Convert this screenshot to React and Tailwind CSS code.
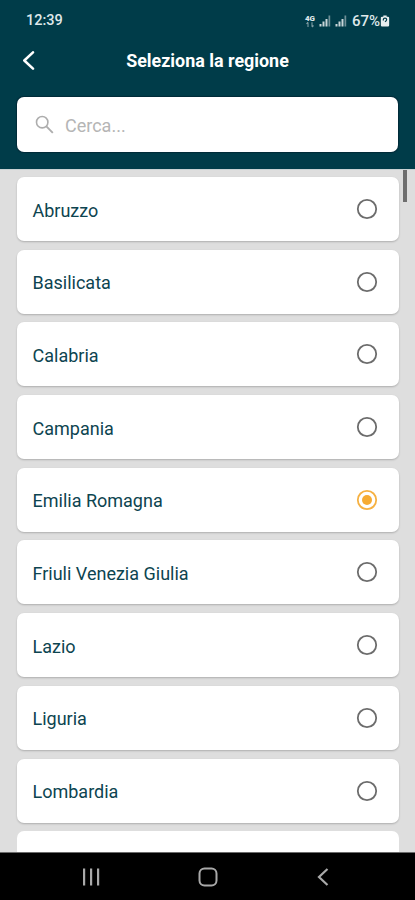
import { useState } from "react";

const regions = [
  "Abruzzo",
  "Basilicata",
  "Calabria",
  "Campania",
  "Emilia Romagna",
  "Friuli Venezia Giulia",
  "Lazio",
  "Liguria",
  "Lombardia",
];

const SignalIcon = () => (
  <svg width="12" height="12" viewBox="0 0 12 12" fill="#c9d6d9">
    <rect x="0.5" y="9" width="2" height="2.5" />
    <rect x="3.5" y="6.5" width="2" height="5" />
    <rect x="6.5" y="4" width="2" height="7.5" />
    <rect x="9.5" y="0.5" width="1.7" height="11" fill="#6f8f97" />
  </svg>
);

const StatusBar = () => (
  <div className="flex h-10 items-center justify-between pl-[26px] pr-[25px] pt-[2px] text-[#dfe8ea]">
    <span className="text-[14.5px] font-medium">12:39</span>
    <div className="flex items-center">
      <svg width="12" height="13" viewBox="0 0 12 13" className="mr-[3px]">
        <text
          x="6"
          y="5.8"
          textAnchor="middle"
          fontSize="7"
          fontWeight="900"
          fill="#dfe8ea"
          textLength="10"
          lengthAdjust="spacingAndGlyphs"
        >
          4G
        </text>
        <path
          d="M4 12V7.5M2.5 9 4 7.2M8 7.2v4.600M9.500 10.500 8 12"
          stroke="#7f9da4"
          strokeWidth="1.1"
          fill="none"
        />
      </svg>
      <SignalIcon />
      <span className="w-1" />
      <SignalIcon />
      <span className="ml-[5px] text-[15px] font-medium">67%</span>
      <svg width="10" height="12" viewBox="0 0 10 13">
        <path
          d="M3.2 0.5h3.600v1.300h1.400q1.300 0 1.300 1.300v8q0 1.400-1.300 1.400H1.800Q.5 12.500.5 11.100v-8q0-1.300 1.300-1.300h1.400z"
          fill="#e8eff0"
        />
        <path
          d="M3.200 6V4.800q0-1.400 1.800-1.400t1.800 1.400Q6.800 6 5 7.400"
          fill="none"
          stroke="#003c49"
          strokeWidth="1.3"
        />
      </svg>
    </div>
  </div>
);

const Radio = ({ checked }) => (
  <svg width="22" height="22" viewBox="0 0 22 22" fill="none">
    <circle
      cx="11"
      cy="11"
      r="9.2"
      stroke={checked ? "#f6b142" : "#6c6c6c"}
      strokeWidth="1.8"
    />
    {checked && <circle cx="11" cy="11" r="5" fill="#f6ab32" />}
  </svg>
);

export default function App() {
  const [selected, setSelected] = useState("Emilia Romagna");

  return (
    <div className="flex h-[900px] w-[415px] flex-col overflow-hidden bg-[#dedede] font-[Roboto,sans-serif]">
      {/* Header */}
      <header className="h-[169px] shrink-0 bg-[#003c49]">
        <StatusBar />
        <div className="grid h-[42px] grid-cols-[60px_1fr_60px] items-center">
          <button aria-label="Indietro" className="pl-[22px]">
            <svg width="14" height="20" viewBox="0 0 14 20" fill="none">
              <path
                d="M11 1.300 2.300 9.500l8.700 8.200"
                stroke="#fff"
                strokeWidth="2.5"
                strokeLinecap="round"
                strokeLinejoin="round"
              />
            </svg>
          </button>
          <h1 className="pt-px text-center text-[17.900px] font-bold text-white">
            Seleziona la regione
          </h1>
        </div>
        <label className="mx-[17px] mt-[15px] flex h-[55px] items-center rounded-[7px] bg-white pl-[18px] shadow-[0_0_1px_1px_#002a38]">
          <svg width="20" height="20" viewBox="0 0 20 20" fill="none">
            <circle cx="7.2" cy="7.2" r="5.7" stroke="#adadad" strokeWidth="1.6" />
            <path d="m11.400 11.400 6.400 6.400" stroke="#adadad" strokeWidth="1.9" />
          </svg>
          <input
            placeholder="Cerca..."
            className="ml-[10px] w-[250px] pt-px text-[18px] outline-none placeholder:text-[#b5b5b5]"
          />
        </label>
      </header>

      {/* Region list */}
      <main className="flex min-h-0 flex-1 justify-between overflow-hidden border-t border-[#c9d2d4] pl-[16.5px] pr-[8px]">
        <ul className="flex w-[382.5px] flex-col gap-[8.7px] pt-[7px]">
          {regions.map((region) => (
            <li key={region} className="shrink-0">
              <button
                onClick={() => setSelected(region)}
                className="flex h-16 w-full items-center justify-between rounded-[7px] bg-white pl-4 pr-[21.5px] text-left text-[18px] text-[#0d4450] shadow-[0_1px_2px_rgba(0,0,0,0.22)]"
              >
                <span className="pt-[2px]">{region}</span>
                <Radio checked={region === selected} />
              </button>
            </li>
          ))}
          {/* Top edge of the next card, below the fold */}
          <li className="h-16 shrink-0 rounded-[7px] bg-white" />
        </ul>
        <div className="h-[32px] w-[4px] bg-[#6e6e6e]" />
      </main>

      {/* Android navigation */}
      <nav className="flex h-12 shrink-0 items-center justify-between border-t border-[#6b6b6b] bg-black pl-[82px] pr-[85px] pt-px">
        <svg width="18" height="18" viewBox="0 0 18 18" fill="#a9a9a9">
          <rect x="1" y="0.5" width="2.2" height="17" />
          <rect x="8" y="0.5" width="2.2" height="17" />
          <rect x="15" y="0.5" width="2.2" height="17" />
        </svg>
        <svg width="20" height="20" viewBox="0 0 20 20" fill="none" className="-ml-px">
          <rect
            x="1.5"
            y="1.5"
            width="17"
            height="17"
            rx="5"
            stroke="#a9a9a9"
            strokeWidth="2"
          />
        </svg>
        <svg width="14" height="18" viewBox="0 0 14 18" fill="none">
          <path d="M11.500 1 3 9l8.500 8" stroke="#a9a9a9" strokeWidth="2.2" />
        </svg>
      </nav>
    </div>
  );
}
